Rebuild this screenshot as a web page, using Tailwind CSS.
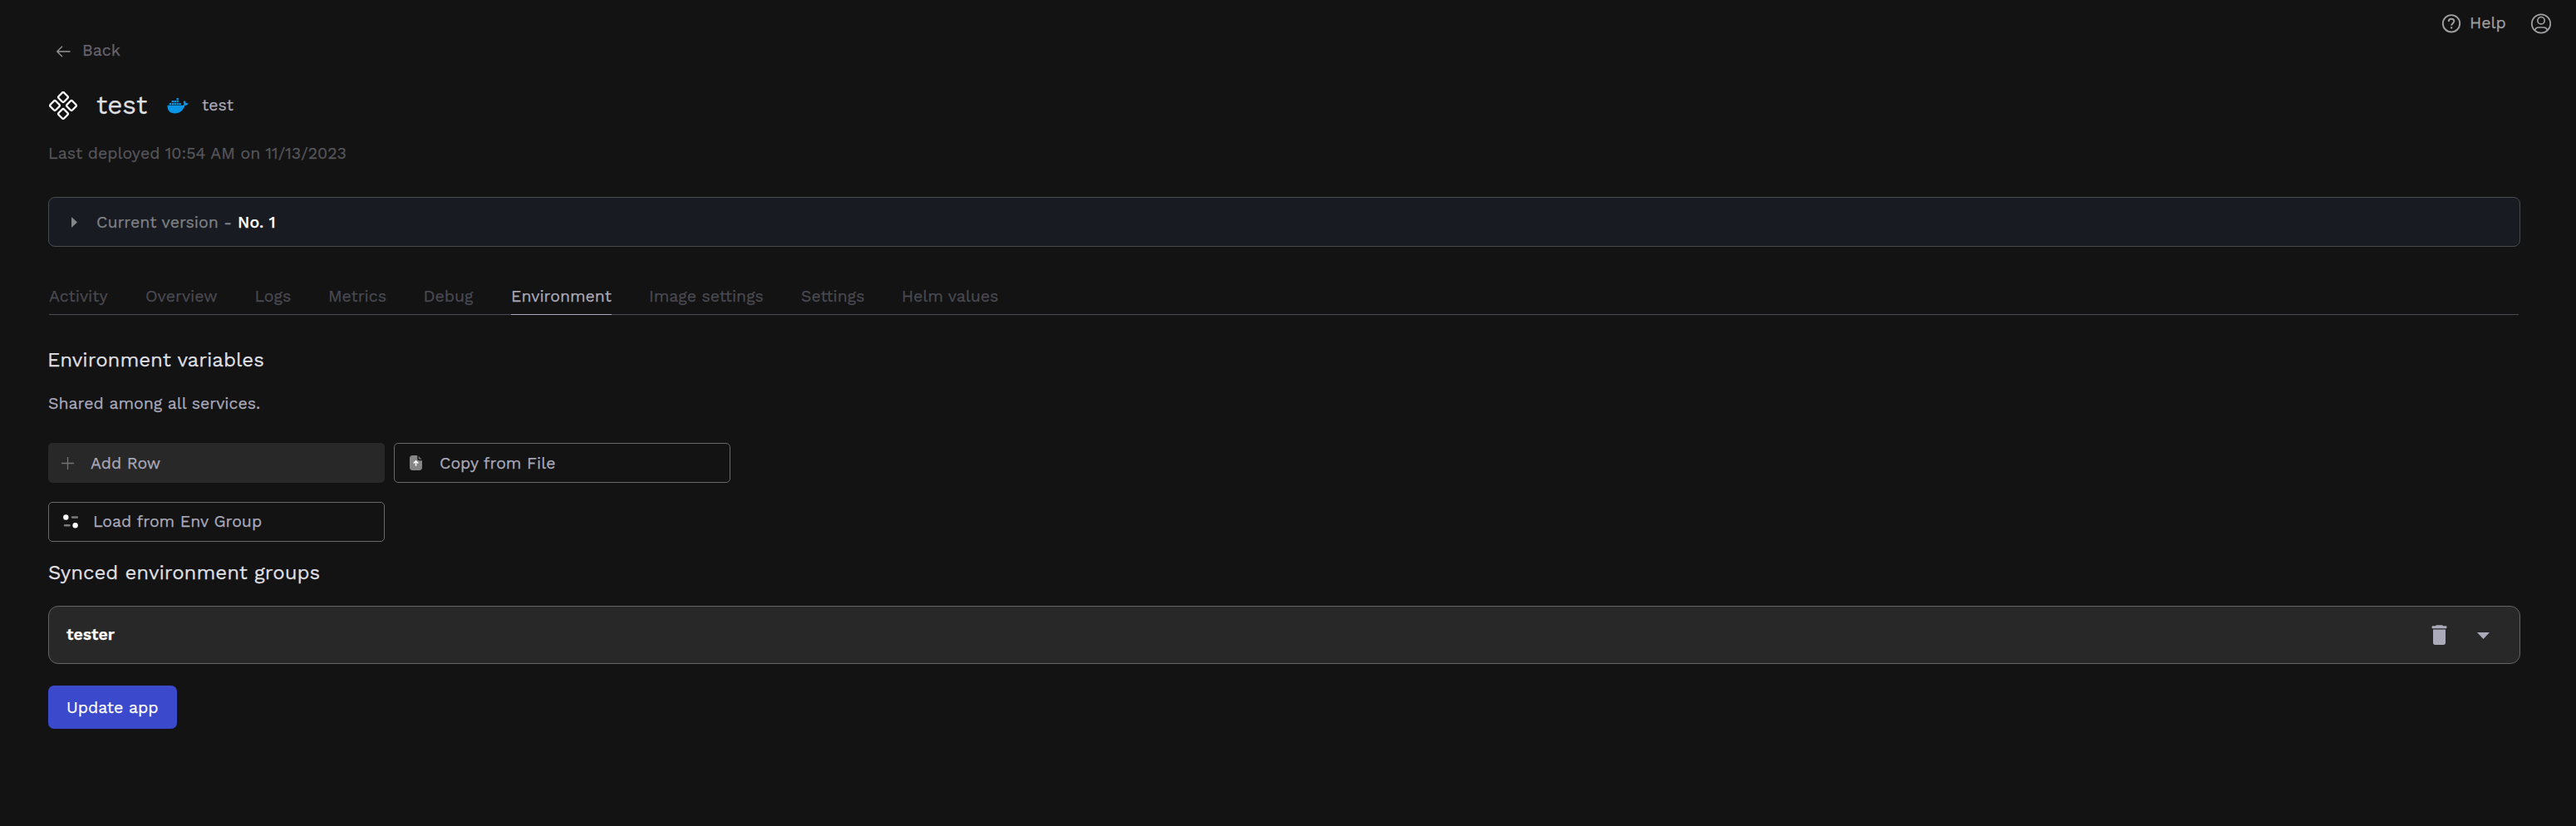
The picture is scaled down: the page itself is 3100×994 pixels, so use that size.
<!DOCTYPE html>
<html lang="en">
<head>
<meta charset="utf-8">
<title>test</title>
<script src="https://cdn.jsdelivr.net/npm/@tailwindcss/browser@4"></script>
</head>
<body class="min-h-[994px] bg-[#131313] font-['Work_Sans','Open_Sans',sans-serif] text-[19.5px] leading-[30px] text-[#aaaabb] whitespace-nowrap [-webkit-text-stroke:0.25px]">
<header class="flex h-[46px] items-center justify-end pt-[9px] pr-[29px] text-[#a0a0a2]">
  <svg class="mr-2.5 size-6" viewBox="0 0 24 24" fill="none" stroke="currentColor" stroke-width="1.9"><circle cx="12" cy="12.3" r="10.2"/><path d="M8.7 9.9c0-2 1.4-3.2 3.3-3.2s3.3 1.2 3.3 2.9c0 2.3-3.1 2.6-3.1 5.100"/><path d="M11.1 17.400h2.1" stroke-width="2.1"/></svg>
  <span class="mt-px mr-[29px] w-11">Help</span>
  <svg class="size-[26px]" viewBox="0 0 26 26" fill="none" stroke="currentColor" stroke-width="1.7"><circle cx="13" cy="13.500" r="11.2"/><circle cx="13" cy="9.700" r="4.2"/><path d="M5.400 21.500c.9-2.700 2.500-3.500 4.400-3.500h6.400c1.900 0 3.500.8 4.400 3.500"/></svg>
</header>
<main class="flex flex-col pr-[67px] pl-[58px]">
  <a class="flex items-center pl-[9px] text-[#67656f]">
    <svg class="mt-0.5 mr-[14px] h-[16px] w-[18px]" viewBox="0 0 18 16" fill="none" stroke="#969696" stroke-width="1.3"><path d="M17.500 8H1.700M8 1.700L1.700 8 8 14.300"/></svg>
    <span>Back</span>
  </a>
  <div class="mt-[29px] flex h-11 items-center">
    <svg class="ml-px size-[34px]" viewBox="0 0 34 34" fill="none" stroke="#fff" stroke-width="2.3"><rect x="12.350" y="2.350" width="9.300" height="9.300" rx="1.800" transform="rotate(45 17 7)"/><rect x="12.350" y="22.350" width="9.300" height="9.300" rx="1.800" transform="rotate(45 17 27)"/><rect x="2.350" y="12.350" width="9.300" height="9.300" rx="1.800" transform="rotate(45 7 17)"/><rect x="22.350" y="12.350" width="9.300" height="9.300" rx="1.800" transform="rotate(45 27 17)"/></svg>
    <span class="ml-[23px] w-[62px] text-[31.5px] text-[#dfdfe1]">test</span>
    <svg class="ml-[23px] h-[20px] w-[26px]" viewBox="0 0 26 20" fill="#0a96e8"><path d="M.5 9.800h18.300c1-.3 1.500-.7 1.800-1.200-1-1.300-1-3.300.1-4.500 1.200.8 1.700 1.800 1.900 2.900 1.100-.2 2.300 0 3.100.5-.6 1.600-2.100 2.400-4.200 2.400C19.200 16 15.500 19.400 9.500 19.400 3.300 19.400.2 15.900.5 9.800z"/><path d="M2.800 6.900h2.300v2.300H2.800zM5.700 6.900H8v2.300H5.700zM8.600 6.900h2.300v2.300H8.600zM11.500 6.900h2.300v2.300h-2.300zM14.400 6.900h2.300v2.300h-2.300zM5.700 4h2.300v2.300H5.700zM8.600 4h2.300v2.300H8.600zM11.500 4h2.300v2.300h-2.300zM11.500 1.100h2.300v2.300h-2.300z"/></svg>
    <span class="ml-4">test</span>
  </div>
  <div class="mt-[21px] text-[#56565b]">Last deployed 10:54 AM on 11/13/2023</div>
  <section class="mt-[37px] flex h-[60px] items-center rounded-[8px] border border-[#494b4f] bg-[#181b22] pl-[27px]">
    <svg class="mr-[23px] h-[13px] w-[7px]" viewBox="0 0 7 13" fill="#85868a"><path d="M0 0l7 6.500L0 13z"/></svg>
    <span class="mt-0.5 w-[170px] text-[#818285]">Current version -</span>
    <span class="mt-0.5 font-medium tracking-[0.2px] text-white">No. 1</span>
  </section>
  <nav class="mr-0.5 ml-px mt-9 flex h-[46px] border-b border-[#494b53] pt-[9px] text-[#4a4a52]">
    <span class="w-[116px]">Activity</span>
    <span class="w-[131.5px]">Overview</span>
    <span class="w-[88.5px]">Logs</span>
    <span class="w-[114.5px]">Metrics</span>
    <span class="w-[105.5px]">Debug</span>
    <span class="h-[37px] w-[121px] border-b border-[#aaaabb] text-[#aaaabb]">Environment</span>
    <span class="ml-[45px] w-[183px]">Image settings</span>
    <span class="w-[121px]">Settings</span>
    <span>Helm values</span>
  </nav>
  <h2 class="mt-[39px] -ml-px text-2xl leading-[30px] text-[#dfdfe1]">Environment variables</h2>
  <p class="mt-[23px]">Shared among all services.</p>
  <div class="mt-[32px] flex gap-[11px]">
    <button class="flex h-12 w-[405px] items-center rounded-[5px] bg-[#282828] pl-4">
      <svg class="mr-5 size-[15px]" viewBox="0 0 15 15" stroke="#747474" stroke-width="1.300"><path d="M0 7.500h15M7.500 0v15"/></svg>
      <span class="mt-0.5">Add Row</span>
    </button>
    <button class="flex h-12 w-[405px] items-center rounded-[5px] border border-[#68686a] pl-[18px]">
      <svg class="mr-[21px] h-[18px] w-[15px]" viewBox="0 0 15 18"><path d="M3.500 0h5.700v3.800c0 1.500 1 2.500 2.500 2.500H15v8.200c0 2.200-1.300 3.500-3.500 3.500h-8C1.300 18 0 16.700 0 14.500v-11C0 1.300 1.300 0 3.500 0z" fill="#868686"/><path d="M10.700.8l3.700 3.900h-2.300c-.9 0-1.400-.5-1.400-1.400z" fill="#707070"/><path d="M7.500 12.800V7M4.700 9.500l2.800-2.800 2.800 2.800" fill="none" stroke="#fff" stroke-width="1.500"/></svg>
      <span class="mt-0.5">Copy from File</span>
    </button>
  </div>
  <button class="mt-[23px] flex h-12 w-[405px] items-center rounded-[5px] border border-[#68686a] pl-[17px]">
    <svg class="-mt-px mr-[18px] h-[17px] w-[18px]" viewBox="0 0 18 17"><path d="M11 3.500h6M2 13.200h5.500" stroke="#7c7c7c" stroke-width="2.500" stroke-linecap="round"/><circle cx="3.300" cy="3.500" r="3.200" fill="#fff"/><circle cx="14.600" cy="13.200" r="3.200" fill="#fff"/></svg>
    <span>Load from Env Group</span>
  </button>
  <h2 class="mt-[22px] text-2xl leading-[30px] text-[#dfdfe1]">Synced environment groups</h2>
  <section class="mt-[25px] flex h-[70px] items-center rounded-[12px] border border-[#646466] bg-[#282828] pr-9 pl-[21px]">
    <span class="mr-auto font-semibold text-white">tester</span>
    <svg class="mr-[36px] h-6 w-[19px]" viewBox="0 0 19 24" fill="#aaaabb"><path d="M4.800 1.200l1.200-1h7l1.200 1h3.300c.8 0 1 .6 1 1.500s-.3 1.500-1 1.500h-16c-.7 0-1-.6-1-1.500s.2-1.500 1-1.500zM2 5.500h15v16c0 1.600-.9 2.500-2.500 2.500h-10C2.900 24 2 23.100 2 21.500z"/></svg>
    <svg class="mt-0.5 h-[8px] w-[15px]" viewBox="0 0 15 8" fill="#aaaabb"><path d="M0 0h15L7.500 8z"/></svg>
  </section>
  <button class="mt-[26px] flex h-[52px] w-[155px] items-center rounded-[7px] bg-[#3b49cc] pt-0.5 pl-[22px] text-white">Update app</button>
</main>
</body>
</html>
